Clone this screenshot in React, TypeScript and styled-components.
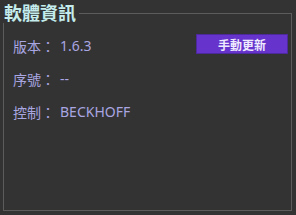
import React from "react";
import styled, { createGlobalStyle } from "styled-components";

const Global = createGlobalStyle`
  html, body { margin: 0; padding: 0; background: #333333; }
  body { width: 296px; height: 215px; overflow: hidden; font-family: "Noto Sans CJK TC", "Noto Sans", sans-serif; }
`;

const Frame = styled.section`
  display: flex;
  flex-direction: column;
  width: 289px;
  height: 211px;
  margin-left: 3px;
`;

const Header = styled.header`
  display: flex;
  align-items: flex-start;
  height: 23px;
`;

const Title = styled.h2`
  margin: 0 3px 0 1px;
  font-size: 18px;
  font-weight: 700;
  line-height: 24px;
  color: #c4ecec;
`;

const Rule = styled.div`
  flex: 1;
  margin-top: 13px;
  height: 10px;
  border-top: 1px solid #5c5c5c;
  border-right: 1px solid #5c5c5c;
`;

const Body = styled.div`
  flex: 1;
  display: flex;
  flex-direction: column;
  padding: 6px 3px 0 9px;
  border: 1px solid #5c5c5c;
  border-top: none;
`;

const Row = styled.div`
  display: flex;
  align-items: center;
  height: 33px;
  font-size: 14px;
  color: #a9a6e2;
`;

const Label = styled.span`
  width: 47px;
`;

const Value = styled.span`
  flex: 1;
  font-family: "Noto Sans", sans-serif;
`;

const Button = styled.button`
  width: 92px;
  height: 20px;
  margin-top: -3px;
  border: 1px solid #4c2a9c;
  background: #6634cc;
  color: #eeeaff;
  font-family: "Noto Sans CJK TC", sans-serif;
  font-size: 12px;
  font-weight: 700;
  padding: 0;
`;

export default function App() {
  return (
    <>
      <Global />
      <Frame>
        <Header>
          <Title>軟體資訊</Title>
          <Rule />
        </Header>
        <Body>
          <Row>
            <Label>版本：</Label>
            <Value>1.6.3</Value>
            <Button>手動更新</Button>
          </Row>
          <Row>
            <Label>序號：</Label>
            <Value>--</Value>
          </Row>
          <Row>
            <Label>控制：</Label>
            <Value>BECKHOFF</Value>
          </Row>
        </Body>
      </Frame>
    </>
  );
}
